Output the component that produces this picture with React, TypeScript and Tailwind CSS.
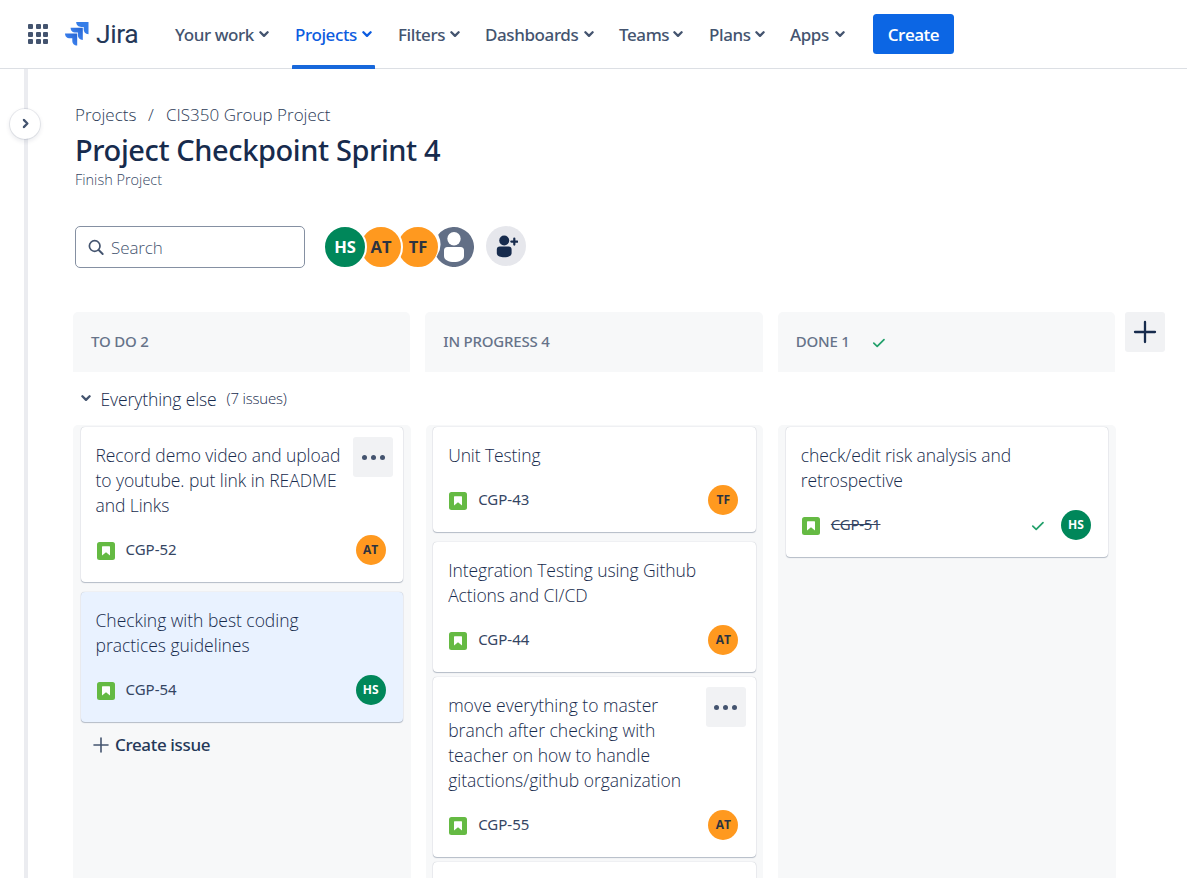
import React from "react";
import { clsx } from "clsx";

function Chevron({ className }: { className?: string }) {
  return (
    <svg width="10" height="7" viewBox="0 0 10 7" fill="none" className={clsx("shrink-0", className)}>
      <path d="M1.4 1.3 5 4.9 8.6 1.3" stroke="currentColor" strokeWidth="2.3" strokeLinecap="round" strokeLinejoin="round" />
    </svg>
  );
}

function Check() {
  return (
    <svg width="14" height="10" viewBox="0 0 14 10" fill="none" className="mt-[2px] shrink-0">
      <path d="M1.8 5.2 5.2 8.4 12 1.6" stroke="#22a06b" strokeWidth="1.7" strokeLinecap="round" strokeLinejoin="round" />
    </svg>
  );
}

function StoryIcon() {
  return (
    <svg width="18" height="18" viewBox="0 0 18 18" className="mt-0.5 ml-px shrink-0">
      <rect width="18" height="18" rx="2.5" fill="#65ba43" />
      <path d="M5.6 4.2h6.8a.6.6 0 0 1 .6.6V13.6L9 10.2 5 13.6V4.8a.6.6 0 0 1 .6-.6Z" fill="#fff" />
    </svg>
  );
}

function Logo() {
  return (
    <svg width="24" height="24" viewBox="0 0 24 24" className="shrink-0">
      <defs>
        <linearGradient id="fold" x1="1" y1="0" x2="0.3" y2="0.75">
          <stop offset="0.2" stopColor="#2a69d6" />
          <stop offset="1" stopColor="#4087f4" />
        </linearGradient>
      </defs>
      <path d="M11.2 0H23.5V12.2C20.4 12.2 18.7 9.9 18.7 7.3V4.9H16.3C13.4 4.9 11.2 3.1 11.2 0Z" fill="#357de8" />
      <path d="M5.6 5.7H17.8V17.9C14.8 17.9 12.9 15.8 12.9 13V10.6H10.6C7.7 10.6 5.6 8.8 5.6 5.7Z" fill="url(#fold)" />
      <path d="M0 11.4H12.2V23.6C9.2 23.6 7.3 21.5 7.3 18.7V16.3H5C2.1 16.3 0 14.5 0 11.4Z" fill="url(#fold)" />
    </svg>
  );
}

const people: Record<string, string> = {
  HS: "bg-[#00875a] text-white",
  AT: "bg-[#ff991f] text-[#2c3340]",
  TF: "bg-[#ff991f] text-[#2c3340]",
};

function SmallAvatar({ name }: { name: string }) {
  return (
    <span className={clsx("flex size-[30px] items-center justify-center rounded-full text-[12px] font-bold", people[name])}>
      {name}
    </span>
  );
}

type Issue = {
  id: string;
  lines: string[];
  who: string;
  menu?: boolean;
  selected?: boolean;
  done?: boolean;
  spacing?: string;
};

function Card({ issue, className }: { issue: Issue; className?: string }) {
  return (
    <article
      className={clsx(
        "relative flex shrink-0 flex-col rounded-[4px] pt-4 pr-[17.5px] pb-[17px] pl-[15px] shadow-[0_1px_1px_#091e4240,0_0_1px_#091e424f]",
        issue.selected ? "bg-[#e9f2ff]" : "bg-white",
        className,
      )}
    >
      <div className={clsx("text-[17.5px] leading-[25px] font-light text-[#172b4d]", issue.spacing ?? "tracking-[-0.1px]")}>
        {issue.lines.map((l) => (
          <p key={l} className="whitespace-nowrap">{l}</p>
        ))}
      </div>
      <div className="mt-[17px] flex h-[30px] items-center">
        <StoryIcon />
        <span
          className={clsx(
            "-mt-px ml-[11px] font-['Noto_Sans'] text-[15px] text-[#344563]",
            issue.done ? "tracking-[-0.25px] line-through" : "tracking-[0px]",
          )}
        >
          {issue.id}
        </span>
        <span className="ml-auto flex items-center gap-4">
          {issue.done && <Check />}
          <SmallAvatar name={issue.who} />
        </span>
      </div>
      {issue.menu && (
        <button className="absolute top-[10px] right-[10px] flex size-10 items-center justify-center gap-[4px] rounded-[3px] bg-[#f1f2f4]">
          <i className="size-[5px] rounded-full bg-[#44546f]" />
          <i className="size-[5px] rounded-full bg-[#44546f]" />
          <i className="size-[5px] rounded-full bg-[#44546f]" />
        </button>
      )}
    </article>
  );
}

const nav = [
  { label: "Your work", item: "w-[120px]", text: "w-[84px]" },
  { label: "Projects", item: "w-[103px]", text: "w-[67px]", active: true },
  { label: "Filters", item: "w-[87px]", text: "w-[52px]" },
  { label: "Dashboards", item: "w-[134px]", text: "w-[99px]" },
  { label: "Teams", item: "w-[90px]", text: "w-[54px]" },
  { label: "Plans", item: "w-[81px]", text: "w-[46px]" },
  { label: "Apps", item: "w-[83px]", text: "w-[45px]" },
];

function Header() {
  return (
    <header className="flex h-[69px] shrink-0 items-center border-b border-[#dcdfe4] pl-7">
      <div className="grid grid-cols-3 gap-[2.5px]">
        {Array.from({ length: 9 }, (_, i) => (
          <i key={i} className="size-[5px] rounded-[1px] bg-[#44546f]" />
        ))}
      </div>
      <div className="ml-[17px] flex w-[110px] items-center">
        <Logo />
        <span className="ml-[7px] font-['Roboto'] text-[26.500px] leading-[40px] font-normal tracking-[-0.4px] text-[#253858]">Jira</span>
      </div>
      <nav className="flex h-[69px] items-center">
        {nav.map((n) => (
          <div key={n.label} className={clsx("relative flex h-full items-center", n.item, n.active ? "text-[#0c5ce0]" : "text-[#44546f]")}>
            <span className={clsx("mt-px font-['Noto_Sans'] text-[17px] font-medium tracking-[-0.4px] whitespace-nowrap", n.text)}>{n.label}</span>
            <Chevron className="mt-px" />
            {n.active && <span className="absolute bottom-0 -left-[3px] h-1 w-[83px] rounded-t-[1px] bg-[#1868db]" />}
          </div>
        ))}
      </nav>
      <button className="flex h-10 w-[81px] items-center justify-center rounded-[3.5px] bg-[#0c66e4] text-[17px] font-semibold tracking-[-0.5px] text-white">
        <span className="mt-px">Create</span>
      </button>
    </header>
  );
}

const bigAvatar = "flex size-11 items-center justify-center rounded-full border-2 border-white text-[16.5px] font-bold";

function Toolbar() {
  return (
    <div className="mt-[35px] flex h-11 items-center">
      <div className="flex h-[42px] w-[230px] items-center rounded-[5px] border border-[#8590a2] pl-3 text-[#44546f]">
        <svg width="17" height="17" viewBox="0 0 17 17" fill="none">
          <circle cx="6.7" cy="7" r="5.3" stroke="#44546f" strokeWidth="1.7" />
          <path d="m10.7 11 4 4" stroke="#44546f" strokeWidth="1.9" strokeLinecap="round" />
        </svg>
        <span className="mt-px ml-[6px] text-[17px] font-light tracking-[-0.1px]">Search</span>
      </div>
      <div className="ml-[18px] flex">
        <span className={clsx(bigAvatar, people.HS, "z-30")}>HS</span>
        <span className={clsx(bigAvatar, people.AT, "z-10 -ml-2")}>AT</span>
        <span className={clsx(bigAvatar, people.TF, "-ml-[7px]")}>TF</span>
        <span className="-ml-2 flex size-11 items-center justify-center">
          <svg width="40" height="40" viewBox="0 0 40 40">
            <path d="M4.2 7.8A20 20 0 1 1 2.5 29.7A22 22 0 0 0 4.2 7.8Z" fill="#626f86" />
            <circle cx="20" cy="11.7" r="6.7" fill="#fff" />
            <path d="M10 23.5a3.5 3.5 0 0 1 3.5-3.5h13a3.5 3.5 0 0 1 3.5 3.5v5.5c0 4-5 6-10 6s-10-2-10-6Z" fill="#fff" />
          </svg>
        </span>
      </div>
      <span className="-mt-0.5 ml-[10px] flex size-10 items-center justify-center rounded-full bg-[#e6e7ec]">
        <svg width="24" height="24" viewBox="0 0 24 24" fill="#172b4d">
          <circle cx="10.2" cy="6.5" r="5" />
          <path d="M2.8 15.5a3 3 0 0 1 3-3h8.8a3 3 0 0 1 3 3v3.8c0 2.5-3.4 4-7.4 4s-7.400-1.500-7.400-4Z" />
          <path d="M20.3 4.6v6M17.3 7.600h6" stroke="#172b4d" strokeWidth="2.2" strokeLinecap="round" />
        </svg>
      </span>
    </div>
  );
}

const columns: { title: string; done?: boolean; issues: Issue[]; gaps: string[] }[] = [
  {
    title: "TO DO 2",
    issues: [
      { id: "CGP-52", lines: ["Record demo video and upload", "to youtube. put link in README", "and Links"], who: "AT", menu: true, spacing: "tracking-[-0.07px]" },
      { id: "CGP-54", lines: ["Checking with best coding", "practices guidelines"], who: "HS", selected: true, spacing: "tracking-[-0.03px]" },
    ],
    gaps: ["", "mt-[10px]"],
  },
  {
    title: "IN PROGRESS 4",
    issues: [
      { id: "CGP-43", lines: ["Unit Testing"], who: "TF" },
      { id: "CGP-44", lines: ["Integration Testing using Github", "Actions and CI/CD"], who: "AT" },
      {
        id: "CGP-55",
        lines: ["move everything to master", "branch after checking with", "teacher on how to handle", "gitactions/github organization"],
        who: "AT",
        menu: true,
        spacing: "tracking-[0px]",
      },
    ],
    gaps: ["", "mt-[10px]", "mt-[5px]"],
  },
  {
    title: "DONE 1",
    done: true,
    issues: [{ id: "CGP-51", lines: ["check/edit risk analysis and", "retrospective"], who: "HS", done: true }],
    gaps: [""],
  },
];

function Board() {
  return (
    <div className="mt-[43px] -ml-0.5 flex min-h-0 flex-1 gap-[9px]">
      <div className="flex w-[1043px] flex-col">
        <div className="grid grid-cols-3 gap-[15px] pr-px">
          {columns.map((c) => (
            <div key={c.title} className="flex h-[60px] items-center gap-[22px] rounded-t-[5px] bg-[#f7f8f9] pl-[18px] font-['Noto_Sans'] text-[15px] font-medium tracking-[-0.2px] text-[#667389]">
              <span className="-mt-px">{c.title}</span>
              {c.done && <Check />}
            </div>
          ))}
        </div>
        <div className="flex h-[53px] items-center pl-2">
          <Chevron className="text-[#44546f]" />
          <span className="mt-px ml-[9.5px] text-[17.5px] font-light tracking-[-0.1px] text-[#172b4d]">Everything else</span>
          <span className="ml-[10px] text-[15px] font-light tracking-[-0.2px] text-[#172b4d]">(7 issues)</span>
        </div>
        <div className="grid min-h-0 flex-1 grid-cols-3 gap-[15px]">
          {columns.map((c) => (
            <section key={c.title} className="flex min-h-0 flex-col overflow-hidden rounded-t-[5px] bg-[#f7f8f9] px-[7.5px] pt-0.5">
              {c.issues.map((issue, i) => (
                <Card key={issue.id} issue={issue} className={c.gaps[i]} />
              ))}
              {c.title === "TO DO 2" && (
                <button className="mt-[10px] flex items-center pl-[12.5px] font-['Noto_Sans'] text-[17px] leading-[25px] font-medium tracking-[-0.35px] text-[#253858]">
                  <svg width="16" height="16" viewBox="0 0 16 16" className="mr-[6px]">
                    <path d="M8 1v14M1 8h14" stroke="#44546f" strokeWidth="1.6" strokeLinecap="round" />
                  </svg>
                  Create issue
                </button>
              )}
              {c.title === "IN PROGRESS 4" && (
                <div className="mt-[5px] h-20 shrink-0 rounded-[4px] bg-white shadow-[0_1px_1px_#091e4240,0_0_1px_#091e424f]" />
              )}
            </section>
          ))}
        </div>
      </div>
      <button className="flex size-10 items-center justify-center rounded-[3px] bg-[#f1f2f4]">
        <svg width="24" height="24" viewBox="0 0 24 24">
          <path d="M12 2v20M2 12h20" stroke="#172b4d" strokeWidth="2.3" strokeLinecap="round" />
        </svg>
      </button>
    </div>
  );
}

export default function App() {
  return (
    <div className="flex h-[878px] w-[1187px] flex-col overflow-hidden bg-white font-['Open_Sans','Noto_Sans',sans-serif]">
      <Header />
      <div className="flex min-h-0 flex-1">
        <aside className="relative ml-6 w-1 shrink-0 bg-[#ebecf0]">
          <button className="absolute top-[40px] -left-[14px] flex size-[30px] items-center justify-center rounded-full bg-white text-[#44546f] shadow-[0_0_0_1px_#091e4214,0_2px_4px_1px_#091e4214]">
            <Chevron className="-mt-px ml-0.5 -rotate-90" />
          </button>
        </aside>
        <main className="flex min-w-0 flex-1 flex-col pl-[47px]">
          <div className="mt-[33px] flex h-[25px] items-center text-[17px] font-light text-[#2c3b57]">
            <span className="w-[73px]">Projects</span>
            <span className="w-[18px]">/</span>
            <span>CIS350 Group Project</span>
          </div>
          <h1 className="mt-[5px] font-['Noto_Sans'] text-[29px] leading-[35px] font-medium tracking-[-0.4px] text-[#172b4d]">Project Checkpoint Sprint 4</h1>
          <p className="mt-[3px] text-[14.5px] leading-5 font-light text-[#344563]">Finish Project</p>
          <Toolbar />
          <Board />
        </main>
      </div>
    </div>
  );
}
